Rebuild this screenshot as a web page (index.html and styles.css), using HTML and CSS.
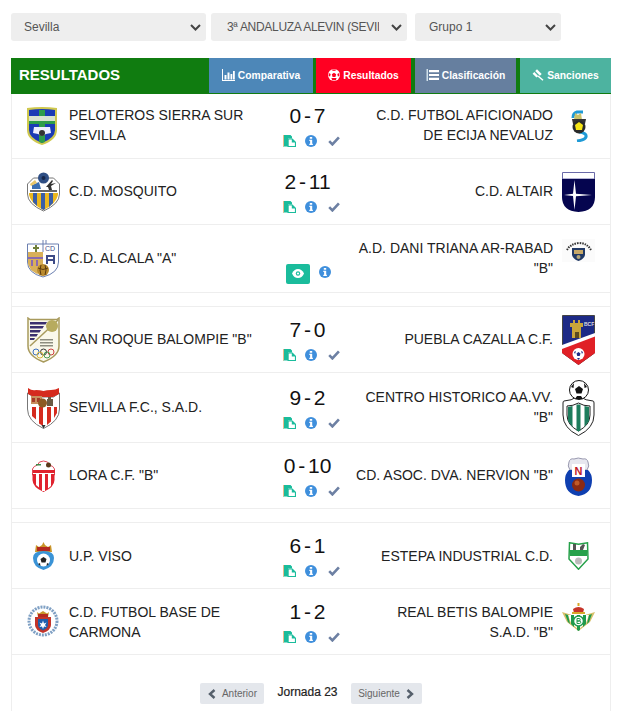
FILE: index.html
```html
<!DOCTYPE html>
<html lang="es">
<head>
<meta charset="utf-8">
<title>Resultados</title>
<link rel="stylesheet" href="styles.css">
</head>
<body>
<svg class="defs" width="0" height="0" aria-hidden="true">
  <symbol id="i-doc" viewBox="0 0 13 12">
    <path fill="#1abc9c" d="M0 0h7.500L9 1.500V3.500H5v8H0z"/>
    <path fill="#e8b98a" d="M0 0h1v11.500H0z"/>
    <path fill="#1abc9c" d="M4.500 3.500h5L13 7v5H4.500z"/>
    <path fill="#fff" d="M5.700 4.600h3.100v3h3.100v3.300H5.700z"/>
  </symbol>
  <symbol id="i-info" viewBox="0 0 12 12">
    <circle cx="6" cy="6" r="6" fill="#3f8fdc"/>
    <path fill="#fff" d="M4.800 1.900h2.400v1.800H4.800zM4.300 4.800h2.900v3.900h.7v1.200H4.300V8.700h.8V6H4.300z"/>
  </symbol>
  <symbol id="i-check" viewBox="0 0 12 10">
    <path fill="none" stroke="#6d80a3" stroke-width="2.600" d="M1.200 5.200l3.200 3.200L10.900 1.400"/>
  </symbol>
</svg>

<form class="filters">
  <select class="filter filter-a"><option>Sevilla</option></select>
  <select class="filter filter-b"><option>3ª ANDALUZA ALEVIN (SEVILLA)</option></select>
  <select class="filter filter-c"><option>Grupo 1</option></select>
</form>

<main class="panel">
  <header class="head">
    <h1 class="title">RESULTADOS</h1>
    <a class="tab tab-blue">
      <svg width="13" height="12" viewBox="0 0 13 12"><path fill="#fff" d="M0 0h1v11h12v1H0zM2.500 6h2v4.500h-2zM5.500 3.500h2v7h-2zM8.500 5h1.800v5.500H8.500zM11 2h1.800v8.500H11z"/></svg>
      Comparativa
    </a>
    <a class="tab tab-red">
      <svg width="12" height="12" viewBox="0 0 12 12"><circle cx="6" cy="6" r="6" fill="#fff"/><path fill="#ff0022" d="M6 3.700l2.200 1.600-.8 2.600H4.600l-.8-2.600zM3.700 1.200l2.300.8 2.300-.8-.9-.6H4.600zM.8 4.100l1.900 1-.6 2.400-1.500-.6zM11.200 4.100l-1.900 1 .6 2.400 1.500-.6zM3.400 9.100h5.200l-.8 2.100H4.200z"/></svg>
      Resultados
    </a>
    <a class="tab tab-slate">
      <svg width="13" height="12" viewBox="0 0 13 12"><path fill="#fff" d="M3 1h10v2.200H3zM3 4.900h10v2.200H3zM3 8.800h10V11H3z"/><path fill="#cfe0ea" d="M.5 0h1.500v12H.5z"/></svg>
      Clasificación
    </a>
    <a class="tab tab-teal">
      <svg width="12" height="12" viewBox="0 0 12 12"><path fill="#fff" d="M5 .3l4.700 4.700-1.800 1.800L3.200 2.100zM2.300 3l3.900 3.900-1.700 1.700L.6 4.700zM6.500 6.400l5 4.300-1 1.100-5-4.400z"/></svg>
      Sanciones
    </a>
  </header>

  <section class="round">
    <article class="match h65">
      <svg class="crest" width="33" height="38" viewBox="0 0 33 38">
        <path fill="#cfc84e" d="M0 1q15-2 30 0v22q0 10-15 15Q0 33 0 23z"/>
        <path fill="#1b3bb5" d="M2 3q13-2 26 0v20q0 8-13 13Q2 31 2 23z"/>
        <path fill="#2e9c4a" d="M12 3h6v32l-3 1-3-1zM2 12h26v5H2z"/>
        <path fill="#d8e3d0" d="M2 9h26v5H2z"/>
        <path fill="#eef" d="M7 20h16l1 6-5 1-4 2-4-2-5-1z"/>
        <circle cx="15" cy="26" r="3" fill="#333"/>
      </svg>
      <h2 class="team">PELOTEROS SIERRA SUR SEVILLA</h2>
      <div class="mid">
        <div class="score">0 - 7</div>
        <div class="acts"><svg class="ic-doc"><use href="#i-doc"/></svg><svg class="ic-info"><use href="#i-info"/></svg><svg class="ic-check"><use href="#i-check"/></svg></div>
      </div>
      <h2 class="team right">C.D. FUTBOL AFICIONADO DE ECIJA NEVALUZ</h2>
      <svg class="crest" width="33" height="32" viewBox="0 0 33 32">
        <path fill="none" stroke="#1f9ad6" stroke-width="3" d="M21 2h-6q-4 1-4 6M17 22q8 1 7 5-1 3-9 4"/>
        <path fill="#c9c26a" d="M13 3l3 2 3-2 1 7h-8z"/>
        <path fill="#333" d="M10 9h14l-1 5H11z"/>
        <circle cx="17" cy="17" r="6.500" fill="#2a2a2a"/>
        <path fill="#f6e516" d="M17 12l4 3-1 5h-6l-1-5z"/>
      </svg>
    </article>

    <article class="match h66">
      <svg class="crest" width="33" height="40" viewBox="0 0 33 40">
        <path fill="#fff" stroke="#777" d="M.5 12l6-6h20l6 6v10q0 10-16 17Q.5 32 .5 22z"/>
        <circle cx="16.500" cy="6" r="5.500" fill="#2f4f85"/>
        <circle cx="16.500" cy="6" r="2" fill="#16264a"/>
        <path fill="#3b6fb2" d="M5 13l7-3 2 7H5z"/>
        <path fill="#e7c66a" d="M3 12l5-4 2 3-6 3z"/>
        <path fill="#333" d="M19 15l6-7 1 1-2 3 5-1-5 3 1 4h-3l-1-3z"/>
        <path fill="#666" d="M3 18h27v2H3z"/>
        <path fill="#ecb81f" d="M2 21h29v2q-2 9-14.500 15Q4 32 2 23z"/>
        <path fill="#3a5ea8" d="M6 21h4v13l-4-4zM14 21h4v16l-1.500 1-2.500-1.500zM22 21h4v10l-4 4z"/>
      </svg>
      <h2 class="team">C.D. MOSQUITO</h2>
      <div class="mid">
        <div class="score">2 - 11</div>
        <div class="acts"><svg class="ic-doc"><use href="#i-doc"/></svg><svg class="ic-info"><use href="#i-info"/></svg><svg class="ic-check"><use href="#i-check"/></svg></div>
      </div>
      <h2 class="team right">C.D. ALTAIR</h2>
      <svg class="crest" width="33" height="40" viewBox="0 0 33 40">
        <path fill="#fff" stroke="#6a6aa8" d="M.5.500h32V7H.5z"/>
        <path fill="#05054f" d="M0 7h33v18q0 14-16.500 15Q0 39 0 25z"/>
        <path fill="#fff" d="M11 24L2 23l9-1.200L12.500 8l1.500 13.800 16 1.200-16 1.200L12.500 38z"/>
      </svg>
    </article>

    <article class="match h68">
      <svg class="crest" width="33" height="38" viewBox="0 0 33 38">
        <path fill="#fff" stroke="#6b7fb0" d="M.5 4h31v18q0 11-15.500 15Q.5 33 .5 22z"/>
        <path stroke="#6b7fb0" fill="none" d="M16 0v12M19 0v4"/>
        <path fill="#d9b05a" d="M1 12h15v19l-6 3-6-4-3-6z"/>
        <path fill="#8a6ab0" d="M1 17h15v2H1zM4 20h2v6H4zM9 20h2v6H9z"/>
        <path fill="#6f7f3a" d="M8 5h2v7H8zM6 7h6v2H6z"/>
        <circle cx="16" cy="30" r="6" fill="#b98a2e"/>
        <path stroke="#5a3a10" fill="none" d="M11 28q5 3 10 0M14 25q-2 5 0 10M18 25q2 5 0 10"/>
        <text class="crest-cd" x="18" y="11">CD</text>
        <path fill="none" stroke="#3d4a86" stroke-width="2" d="M20 24v-8h7v8M20 20h7"/>
      </svg>
      <h2 class="team">C.D. ALCALA "A"</h2>
      <div class="mid">
        <div class="score"></div>
        <div class="acts acts-view">
          <a class="view"><svg width="12" height="9" viewBox="0 0 12 9"><path fill="#fff" d="M6 0q4 0 6 4.500Q10 9 6 9T0 4.500Q2 0 6 0z"/><circle cx="6" cy="4.500" r="2.200" fill="#1abc9c"/><circle cx="6" cy="4.500" r="1.100" fill="#fff"/></svg></a>
          <svg class="ic-info"><use href="#i-info"/></svg>
        </div>
      </div>
      <h2 class="team right">A.D. DANI TRIANA AR-RABAD "B"</h2>
      <svg class="crest" width="33" height="40" viewBox="0 0 33 40">
        <path fill="#fbfbfb" d="M0 0h33v23H0z"/>
        <path fill="none" stroke="#333" stroke-width="2" stroke-dasharray="1.500 1" d="M5 11q3-6 12-7 8 0 12 7"/>
        <path fill="#223a66" d="M10 9h13v7q-1 4-6.500 6Q11 20 10 16z"/>
        <path fill="#c7a868" d="M12 11h9v4h-9z"/>
        <circle cx="16.500" cy="18" r="2" fill="#b5a77a"/>
      </svg>
    </article>
  </section>

  <section class="round">
    <article class="match h66">
      <svg class="crest" width="33" height="46" viewBox="0 0 33 46">
        <path fill="#faf8ea" stroke="#a89a5c" stroke-width="1.500" d="M1 1l2 1.500h27L32 1v28q0 10-15.500 16Q1 39 1 29z"/>
        <path fill="#3b2f6e" d="M3 5h17l-1.500 2.500H3zM3 9h14l-1.500 2.500H3zM3 13h11l-1.500 2.500H3zM3 17h8l-1.500 2.500H3zM3 21h5l-1 2H3z"/>
        <path stroke="#a89a5c" stroke-width="1.500" fill="none" d="M3 29L31 3"/>
        <circle cx="25" cy="9" r="6" fill="#b7ab5e"/>
        <path fill="#8d8d80" d="M13 22h13v1.500H13zM13 25h13v1.500H13zM13 28h13v1.500H13z"/>
        <g fill="none" stroke-width="1">
          <circle cx="9" cy="35" r="3" stroke="#3a6fc0"/><circle cx="16.500" cy="35" r="3" stroke="#333"/><circle cx="24" cy="35" r="3" stroke="#d04040"/>
          <circle cx="13" cy="38" r="3" stroke="#d8b840"/><circle cx="20" cy="38" r="3" stroke="#4a9a50"/>
        </g>
      </svg>
      <h2 class="team">SAN ROQUE BALOMPIE "B"</h2>
      <div class="mid">
        <div class="score">7 - 0</div>
        <div class="acts"><svg class="ic-doc"><use href="#i-doc"/></svg><svg class="ic-info"><use href="#i-info"/></svg><svg class="ic-check"><use href="#i-check"/></svg></div>
      </div>
      <h2 class="team right">PUEBLA CAZALLA C.F.</h2>
      <svg class="crest" width="33" height="50" viewBox="0 0 33 50">
        <path fill="#1d2a86" stroke="#444" d="M.5.500h32V38L16.500 49.500.5 38z"/>
        <path fill="#e02026" d="M0 33L33 21v17L16.500 50 0 38z"/>
        <path fill="#fff" d="M0 30L33 18v3.500L0 34z"/>
        <path fill="#c9a53a" d="M8 8h3V5h2v3h3V5h2v3h3v4h-2v11H10V12H8z"/>
        <path fill="#5a4a20" d="M13 17h4v6h-4z"/>
        <text class="crest-bcf" x="22" y="11">BCF</text>
        <circle cx="16.500" cy="39" r="6" fill="#fff"/>
        <path fill="#1d2a86" d="M16.500 37l2 1.500-.8 2.500h-2.400l-.8-2.500zM12 37l2-1-1 3zM21 37l-2-1 1 3zM15 43h3l-1.500 2z"/>
      </svg>
    </article>

    <article class="match h70">
      <svg class="crest" width="33" height="42" viewBox="0 0 33 42">
        <path fill="#fff" stroke="#777" d="M.5 6l6 4h20l6-4v16q0 12-16 19.500Q.5 34 .5 22z"/>
        <path fill="#d52b1e" d="M1 1q4 3 8 2 4 0 7.500 1 3-1 7.500-1t8-2v6l-6 3H7L1 7z"/>
        <path fill="#c8905e" d="M4 9h11v8H4z"/>
        <path fill="#a63a28" d="M5 11h3v4H5zM10 11h3v4h-3z"/>
        <path fill="#6a5a44" d="M21 10h3v2h2v7h-6v-7h1z"/>
        <path fill="#d52b1e" d="M5 20h4v12.500L5 29zM12 20h4v19l-4-2.500zM20 20h4v14.500L20 38zM27 20h3v6l-3 5z"/>
        <circle cx="15.500" cy="16" r="4.500" fill="#8c5a24"/>
        <path fill="#333" d="M14.500 38h4l-2 3.500z"/>
      </svg>
      <h2 class="team">SEVILLA F.C., S.A.D.</h2>
      <div class="mid">
        <div class="score">9 - 2</div>
        <div class="acts"><svg class="ic-doc"><use href="#i-doc"/></svg><svg class="ic-info"><use href="#i-info"/></svg><svg class="ic-check"><use href="#i-check"/></svg></div>
      </div>
      <h2 class="team right">CENTRO HISTORICO AA.VV. "B"</h2>
      <svg class="crest" width="33" height="56" viewBox="0 0 33 56">
        <path fill="#fff" stroke="#222" d="M2 21q7 0 14.500-5 8 5 14.500 5 1 0 1 2v12q0 13-15.500 20.500Q1 48 1 35V23q0-2 1-2z"/>
        <path fill="none" stroke="#222" d="M5 26q6 0 11.500-3 5 3 11.500 3v9q0 10-11.500 16Q5 45 5 35z"/>
        <path fill="#1d7c5c" d="M6 27l4.500-1v21L6 41zM14.500 24.500h4v26l-2 1-2-1zM22.500 26l4.500 1v14l-4.500 6z"/>
        <circle cx="17" cy="10" r="9.500" fill="#fff" stroke="#111"/>
        <path fill="#111" d="M17 6l4 3-1.500 4.500h-5L13 9zM9 7l3-4-.5 5zM25 7l-3-4 .5 5zM13 19l2-3h4l2 3z"/>
      </svg>
    </article>

    <article class="match h66">
      <svg class="crest" width="33" height="32" viewBox="0 0 33 32">
        <path fill="#fff" stroke="#e04a58" d="M5.500 9q1-3 5-4 1-4 6-4t6 4q4 1 5 4v6H5.500z"/>
        <path fill="#3d8a4a" d="M9 4h5v1.500H9z"/>
        <path fill="#5a3a1a" d="M19 5a2.500 2.500 0 1 1 5 0 2.500 2.500 0 0 1-5 0z"/>
        <path fill="#e0222e" d="M6 10h22v3H6z"/>
        <path fill="#e0222e" d="M5.500 14h22v6q0 7-11 12-11-5-11-12z"/>
        <path fill="#fff" d="M9 14h3v13.500L9 25zM15 14h3v17h-3zM21 14h3v12l-3 2.500z"/>
      </svg>
      <h2 class="team">LORA C.F. "B"</h2>
      <div class="mid">
        <div class="score">0 - 10</div>
        <div class="acts"><svg class="ic-doc"><use href="#i-doc"/></svg><svg class="ic-info"><use href="#i-info"/></svg><svg class="ic-check"><use href="#i-check"/></svg></div>
      </div>
      <h2 class="team right">CD. ASOC. DVA. NERVION "B"</h2>
      <svg class="crest" width="33" height="40" viewBox="0 0 33 40">
        <path fill="#e7e7ef" stroke="#9a9ab0" d="M7 6q1-4 5-3 4-2 9 0 4-1 5 3 2 4-1 8H8Q5 10 7 6z"/>
        <path fill="#0f3fb0" d="M7 14h3V8h13v6h3q4 4 4 10 0 14-13.500 16Q3 38 3 24q0-6 4-10z"/>
        <path fill="#fff" d="M10 8h13v13H10z"/>
        <text class="crest-n" x="16.500" y="19">N</text>
        <circle cx="16.500" cy="29" r="6.500" fill="#8a2a12"/>
        <circle cx="15" cy="27" r="2.500" fill="#c05a28"/>
      </svg>
    </article>
  </section>

  <section class="round">
    <article class="match h66">
      <svg class="crest" width="33" height="30" viewBox="0 0 33 30">
        <path fill="#c9952a" d="M9 4l3 2 3-2 1.500-3L18 4l3 2 3-2 1 7H8z"/>
        <path fill="#b52a20" d="M10 6h13v4H10z"/>
        <path fill="#3a93d6" d="M6 17q0-7 10.500-7T27 17q0 9-10.500 12Q6 26 6 17z"/>
        <circle cx="16.500" cy="19" r="6.500" fill="#fff"/>
        <path fill="#222" d="M16.500 16l3 2-1 3.500h-4l-1-3.500zM11 23l2-1 .5 3zM22 23l-2-1-.5 3z"/>
      </svg>
      <h2 class="team">U.P. VISO</h2>
      <div class="mid">
        <div class="score">6 - 1</div>
        <div class="acts"><svg class="ic-doc"><use href="#i-doc"/></svg><svg class="ic-info"><use href="#i-info"/></svg><svg class="ic-check"><use href="#i-check"/></svg></div>
      </div>
      <h2 class="team right">ESTEPA INDUSTRIAL C.D.</h2>
      <svg class="crest" width="33" height="28" viewBox="0 0 33 28">
        <path fill="#fff" stroke="#26a14a" stroke-width="1.500" d="M7.500.800l9 1.500 9-1.500L26 17 16.500 27.200 7 17z"/>
        <path fill="#26a14a" d="M8 8h17v6H8z"/>
        <path fill="#555" d="M11 2h3v6h-3zM18 5l3-3 2 1-2 5h-3z"/>
        <circle cx="16.500" cy="19" r="3.500" fill="#bbb"/>
      </svg>
    </article>

    <article class="match h66">
      <svg class="crest" width="33" height="33" viewBox="0 0 33 33">
        <circle cx="16" cy="16" r="14" fill="none" stroke="#7fa0c4" stroke-width="3" stroke-dasharray="2 1"/>
        <path fill="#c9952a" d="M10 7l2 1.500L16 6l4 2.500L22 7l-1 5H11z"/>
        <path fill="#b52a20" d="M11 9h10v3H11z"/>
        <path fill="#c3342a" d="M8 12h16v8q0 5-8 8-8-3-8-8z"/>
        <path fill="#1e5fae" d="M11 14h10v6q0 3-5 5.500-5-2.500-5-5.500z"/>
        <path fill="#fff" d="M16 15.500l1 3 2.500-1-1.500 2.500 1.500 2-2.500-.5-1 2.500-1-2.500-2.500.5 1.500-2-1.500-2.500 2.500 1z"/>
      </svg>
      <h2 class="team">C.D. FUTBOL BASE DE CARMONA</h2>
      <div class="mid">
        <div class="score">1 - 2</div>
        <div class="acts"><svg class="ic-doc"><use href="#i-doc"/></svg><svg class="ic-info"><use href="#i-info"/></svg><svg class="ic-check"><use href="#i-check"/></svg></div>
      </div>
      <h2 class="team right">REAL BETIS BALOMPIE S.A.D. "B"</h2>
      <svg class="crest" width="33" height="38" viewBox="0 0 33 38">
        <path fill="#d8c06a" d="M0 9l10 3h13l10-3-5 10-11.500 9L5 19z"/>
        <path fill="#fff" d="M6 12h21l-3 8-7.500 6.500L9 20z"/>
        <path fill="#1f9a4c" d="M3 11l3 1 2 9-2-2zM9 12h3v12l-3-3zM15 12h3v15l-1.500 1-1.500-1zM21 12h3v9l-3 3zM27 12l3-1-3 8-2 2z"/>
        <path fill="#c7352a" d="M11 6q5.500-4 11 0l-1 4H12z"/>
        <path fill="#d8a82a" d="M10 9h13v2H10zM15.500 0h2v3h-2z"/>
        <circle cx="16.500" cy="18" r="5" fill="#fff" stroke="#1f9a4c" stroke-width="1.500"/>
        <path fill="none" stroke="#1f9a4c" d="M15 15.500v5h2.500a1.200 1.200 0 0 0 0-2.500H15h2a1.200 1.200 0 0 0 0-2.500z"/>
      </svg>
    </article>
  </section>

  <footer class="pager">
    <a class="page-btn page-prev"><svg width="8" height="10" viewBox="0 0 8 10"><path fill="none" stroke="#555f6b" stroke-width="2.400" d="M6.500 1L2 5l4.500 4"/></svg>Anterior</a>
    <strong class="jornada">Jornada 23</strong>
    <a class="page-btn page-next">Siguiente<svg width="8" height="10" viewBox="0 0 8 10"><path fill="none" stroke="#555f6b" stroke-width="2.400" d="M1.500 1L6 5 1.500 9"/></svg></a>
  </footer>
</main>
</body>
</html>
```

FILE: styles.css
```css
* { box-sizing: border-box; }
html, body { margin: 0; padding: 0; background: #fff; }
body {
  padding: 13px 18px 0 11px;
  font-family: "Liberation Sans", Arial, sans-serif;
  color: #222;
  height: 711px;
  overflow: hidden;
}
.defs { position: absolute; }

.filters { display: flex; height: 28px; margin: 0 0 17px; }
.filter {
  appearance: none;
  -webkit-appearance: none;
  height: 28px;
  border: 0;
  border-radius: 3px;
  padding: 0 27px 0 13px;
  font: 12px "Liberation Sans", Arial, sans-serif;
  color: #555;
  background-color: #eee;
  background-image: url("data:image/svg+xml,%3Csvg xmlns='http://www.w3.org/2000/svg' width='11' height='7'%3E%3Cpath fill='none' stroke='%23444' stroke-width='2' d='M1 1l4.500 4.500L10 1'/%3E%3C/svg%3E");
  background-repeat: no-repeat;
  background-position: right 5px center;
}
.filter-a { width: 195px; margin-right: 5px; }
.filter-b { width: 196px; margin-right: 8px; padding-left: 16px; padding-right: 28px; letter-spacing: -0.3px; }
.filter-c { width: 146px; padding-left: 14px; }

.panel {
  width: 600px;
  height: 653px;
  border: 1px solid #eee;
  border-top: 0;
  border-bottom: 0;
}
.head {
  display: flex;
  height: 36px;
  margin: 0 -1px;
  background: #107c10;
}
.title {
  flex: 1;
  margin: 0;
  padding-left: 8px;
  font-size: 15px;
  line-height: 34px;
  font-weight: 700;
  color: #fff;
}
.tab {
  display: flex;
  align-items: center;
  justify-content: center;
  gap: 3px;
  height: 35px;
  padding-bottom: 1px;
  color: #fff;
  font-size: 10.3px;
  font-weight: 700;
}
.tab-blue { width: 104px; background: #4d87b8; }
.tab-red { width: 95px; margin-left: 3px; background: #ff0022; }
.tab-slate { width: 101px; margin-left: 4px; background: #667f9f; }
.tab-teal { width: 91px; margin-left: 4px; background: #4db3a0; }

.round + .round { margin-top: 13px; border-top: 1px solid #eee; }
.match {
  display: grid;
  grid-template-columns: 33px 205px 89px 208px 33px;
  align-items: center;
  padding: 0 15px;
  border-bottom: 1px solid #eee;
}
.h65 { height: 65px; }
.h66 { height: 66px; }
.h68 { height: 68px; }
.h70 { height: 70px; }
.crest { display: block; }
.team {
  margin: 0;
  padding: 0 0 2px 9px;
  font-size: 14px;
  font-weight: 400;
  line-height: 20px;
  color: #222;
}
.team.right { padding: 0 9px 2px 0; text-align: right; }
.round:last-of-type .team { padding-bottom: 0; }
.mid { display: flex; flex-direction: column; align-items: center; }
.score {
  height: 30px;
  padding-right: 4px;
  font-size: 21px;
  line-height: 30px;
  word-spacing: -3px;
  color: #111;
  white-space: nowrap;
}
.acts {
  display: flex;
  align-items: center;
  height: 20px;
  padding-left: 3px;
}
.acts-view { height: 23px; padding: 0 3px 0 0; }
.ic-doc { width: 13px; height: 12px; margin-right: 9px; }
.ic-info { width: 12px; height: 12px; margin-right: 11px; }
.ic-check { width: 12px; height: 10px; }
.acts-view .ic-info { margin: -4px 0 0 9px; }
.view {
  display: flex;
  align-items: center;
  justify-content: center;
  width: 24px;
  height: 20px;
  border-radius: 2px;
  background: #1abc9c;
}
.crest-cd { font: 7px "Liberation Sans", sans-serif; fill: #3d4a86; }
.crest-bcf { font: 700 5px "Liberation Sans", sans-serif; fill: #ddd; }
.crest-n { font: 700 11px "Liberation Sans", sans-serif; fill: #c01c2c; text-anchor: middle; }

.pager {
  display: flex;
  justify-content: center;
  align-items: flex-start;
  padding-top: 28px;
  gap: 13px;
}
.page-btn {
  display: flex;
  align-items: center;
  justify-content: center;
  gap: 6px;
  height: 21px;
  border-radius: 2px;
  background: #e4e7ec;
  color: #666;
  font-size: 10px;
}
.page-prev { width: 64px; }
.page-next { width: 71px; }
.jornada {
  margin-top: 1px;
  font-size: 12px;
  font-weight: 400;
  line-height: 16px;
  color: #222;
  -webkit-text-stroke: 0.2px #222;
}
```
